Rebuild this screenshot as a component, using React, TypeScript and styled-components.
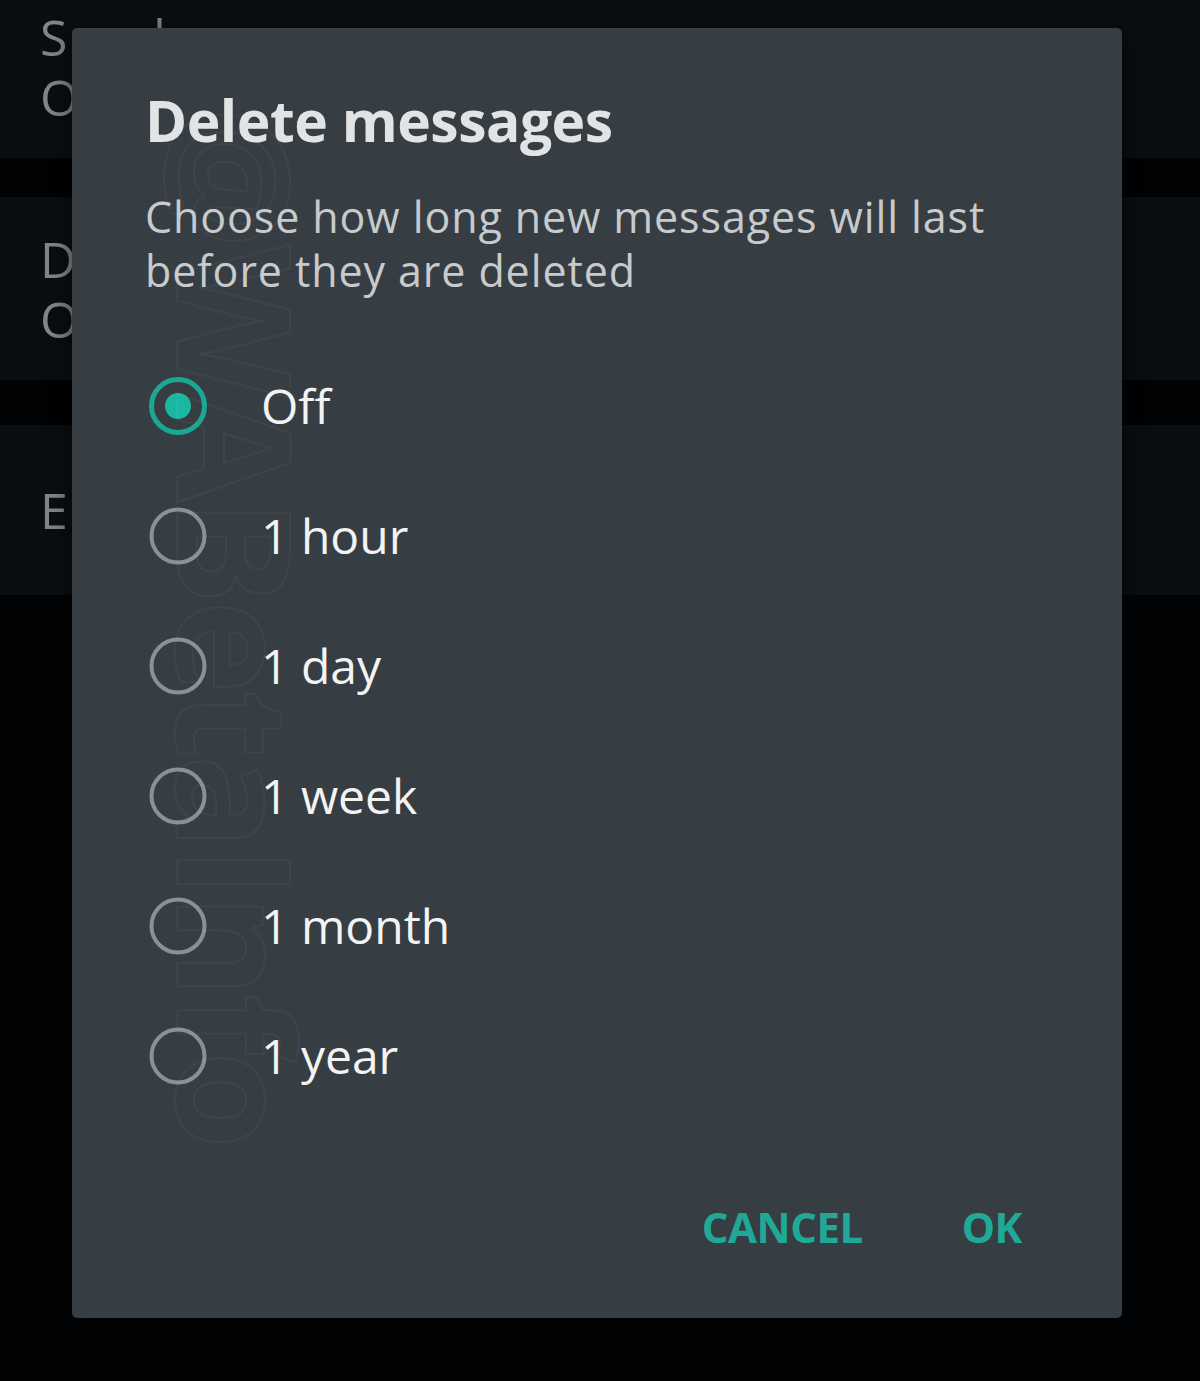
import styled, { createGlobalStyle } from "styled-components";
import { useState } from "react";

const GlobalStyle = createGlobalStyle`
  html, body {
    margin: 0;
    padding: 0;
    background: #020305;
  }
  body {
    font-family: "Open Sans", "Noto Sans", sans-serif;
  }
`;

const Screen = styled.div`
  position: relative;
  width: 1200px;
  height: 1381px;
  overflow: hidden;
  background: #020305;
`;

// settings list behind the dialog
const SettingsList = styled.div`
  display: flex;
  flex-direction: column;
`;

const SettingRow = styled.div<{ $height: number; $shift?: number }>`
  display: flex;
  flex-direction: column;
  justify-content: center;
  height: ${(p) => p.$height}px;
  padding: 0 0 ${(p) => p.$shift ?? 0}px 40px;
  box-sizing: border-box;
  background: #0a0e11;
  color: #80868a;
  font-size: 50px;
  line-height: 60px;
  letter-spacing: 3px;
`;

const Divider = styled.div<{ $height: number }>`
  height: ${(p) => p.$height}px;
  background: #010203;
`;

const Overlay = styled.div`
  position: absolute;
  inset: 0;
  padding: 28px 78px 63px 72px;
  display: flex;
`;

const Dialog = styled.div`
  position: relative;
  flex: 1;
  display: flex;
  flex-direction: column;
  padding: 60px 100px 51px 73px;
  background: #363e44;
  border-radius: 5px;
  box-shadow: 0 6px 24px rgba(0, 0, 0, 0.6);
  overflow: hidden;
`;

const Watermark = styled.span`
  position: absolute;
  left: 166px;
  top: 598px;
  transform: translate(-50%, -50%) rotate(90deg);
  white-space: nowrap;
  font-size: 158px;
  font-weight: 700;
  letter-spacing: -4px;
  color: transparent;
  -webkit-text-stroke: 2px rgba(255, 255, 255, 0.04);
  pointer-events: none;
`;

const Title = styled.h1`
  margin: 0;
  font-size: 57px;
  line-height: 64px;
  font-weight: 700;
  color: #e2e3e4;
  letter-spacing: -0.5px;
`;

const Message = styled.p`
  margin: 38px 0 0;
  font-size: 43px;
  line-height: 54px;
  letter-spacing: 0.9px;
  color: #c8cacc;
`;

const Options = styled.div`
  display: flex;
  flex-direction: column;
  margin-top: 43px;
`;

const Option = styled.label`
  display: flex;
  align-items: center;
  gap: 50px;
  height: 130px;
  cursor: pointer;
`;

const RadioMark = styled.svg`
  width: 66px;
  height: 66px;
  flex-shrink: 0;
`;

const OptionLabel = styled.span`
  font-size: 48px;
  line-height: 60px;
  color: #f3f3f3;
`;

const Actions = styled.div`
  display: flex;
  justify-content: flex-end;
  align-items: center;
  gap: 99px;
  height: 80px;
  margin-top: auto;
`;

const ActionButton = styled.button`
  border: none;
  background: none;
  padding: 0;
  font-family: inherit;
  font-size: 42px;
  line-height: 60px;
  font-weight: 700;
  color: #1fa996;
  letter-spacing: -0.5px;
  cursor: pointer;
`;

const OPTIONS = ["Off", "1 hour", "1 day", "1 week", "1 month", "1 year"];

function Radio({ checked }: { checked: boolean }) {
  return (
    <RadioMark viewBox="0 0 66 66">
      {checked ? (
        <>
          <circle cx="33" cy="33" r="26.5" fill="none" stroke="#1ca794" strokeWidth="5" />
          <circle cx="33" cy="33" r="13" fill="#1bb7a3" />
        </>
      ) : (
        <circle cx="33" cy="33" r="26.5" fill="none" stroke="#8b9094" strokeWidth="4" />
      )}
    </RadioMark>
  );
}

export default function App() {
  const [selected, setSelected] = useState("Off");

  return (
    <Screen>
      <GlobalStyle />
      <SettingsList>
        <SettingRow $height={158} $shift={24}>
          <span>Send messages</span>
          <span>Only admins</span>
        </SettingRow>
        <Divider $height={39} />
        <SettingRow $height={183}>
          <span>Disappearing messages</span>
          <span>Off</span>
        </SettingRow>
        <Divider $height={45} />
        <SettingRow $height={170}>
          <span>Edit group info</span>
        </SettingRow>
      </SettingsList>

      <Overlay>
        <Dialog>
          <Watermark>@WABetaInfo</Watermark>
          <Title>Delete messages</Title>
          <Message>
            Choose how long new messages will last before they are deleted
          </Message>
          <Options>
            {OPTIONS.map((opt) => (
              <Option key={opt} onClick={() => setSelected(opt)}>
                <Radio checked={selected === opt} />
                <OptionLabel>{opt}</OptionLabel>
              </Option>
            ))}
          </Options>
          <Actions>
            <ActionButton>CANCEL</ActionButton>
            <ActionButton>OK</ActionButton>
          </Actions>
        </Dialog>
      </Overlay>
    </Screen>
  );
}
